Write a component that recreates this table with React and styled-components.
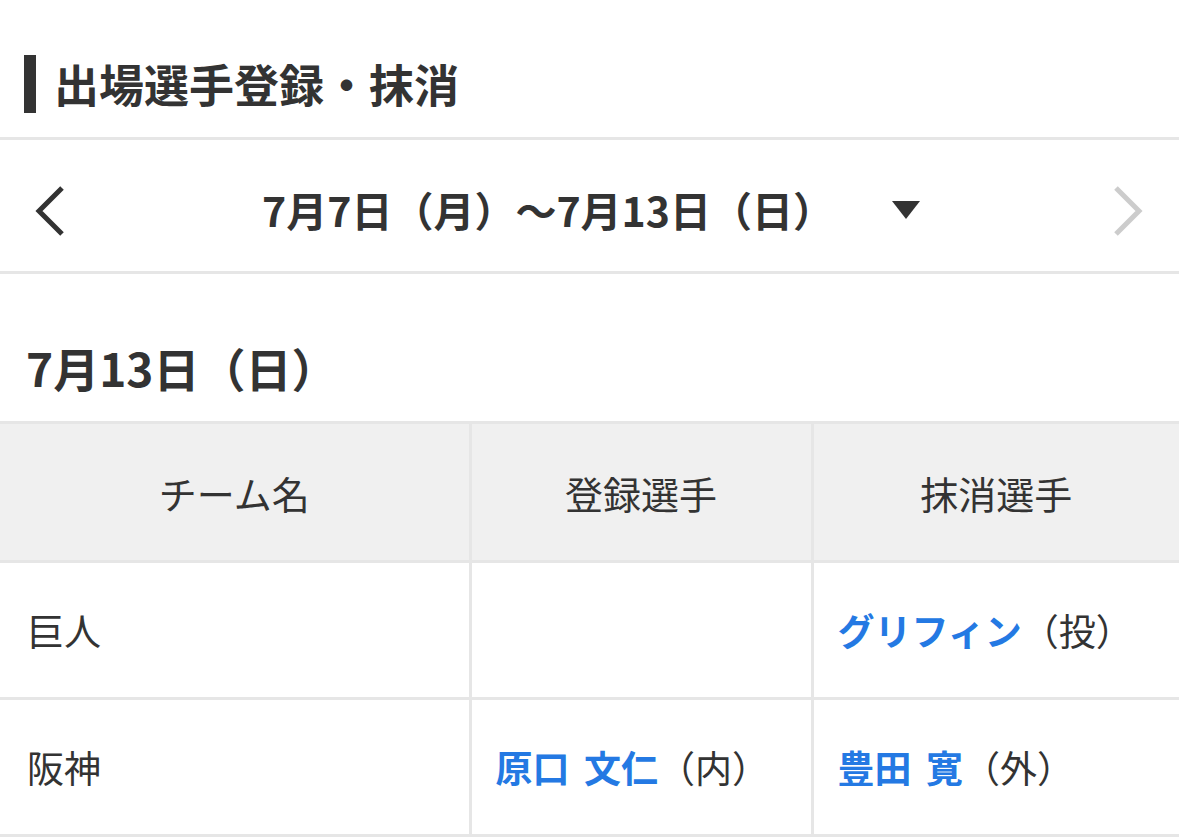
import React from 'react';
import styled, { createGlobalStyle } from 'styled-components';

const GlobalStyle = createGlobalStyle`
  body {
    margin: 0;
    background: #fff;
    color: #333;
    font-family: "Noto Sans CJK JP", "Noto Sans", sans-serif;
  }
`;

const rows = [
  { team: '巨人', add: null, remove: { name: 'グリフィン', pos: '投' } },
  { team: '阪神', add: { name: '原口 文仁', pos: '内' }, remove: { name: '豊田 寛', pos: '外' } },
];

const Page = styled.div`
  width: 1179px;
`;

const TitleBar = styled.header`
  height: 140px;
  box-sizing: border-box;
  padding: 55px 0 0 24px;
  border-bottom: 3px solid #e6e6e6;
`;

const Title = styled.h1`
  margin: 0;
  height: 58px;
  border-left: 12px solid #333;
  padding-left: 18px;
  font-size: 45px;
  font-weight: 700;
  line-height: 58px;
  color: #333;
`;

const WeekNav = styled.nav`
  height: 134px;
  box-sizing: border-box;
  border-bottom: 3px solid #e6e6e6;
  display: flex;
  align-items: center;
  justify-content: space-between;
  padding: 6px 36px 0 35px;
`;

const Arrow = styled.button`
  border: 0;
  background: none;
  padding: 0;
  width: 30px;
  height: 52px;
  margin-top: 4px;
  display: flex;
  align-items: center;
  justify-content: center;
  color: ${(p) => (p.$disabled ? '#cccccc' : '#333')};
`;

const WeekSelect = styled.div`
  display: flex;
  align-items: center;
  gap: 58px;
  margin-left: 4px;
`;

const WeekLabel = styled.span`
  font-size: 41px;
  font-weight: 700;
  color: #333;
`;

const Caret = styled.span`
  width: 0;
  height: 0;
  border-left: 14px solid transparent;
  border-right: 14px solid transparent;
  border-top: 18px solid #333;
  margin-top: 2px;
`;

const DayHeading = styled.h2`
  margin: 68px 0 29px;
  padding-left: 26px;
  font-size: 46px;
  font-weight: 700;
  line-height: 50px;
  color: #333;
`;

const Table = styled.table`
  width: 100%;
  border-collapse: collapse;
  table-layout: fixed;
  border-top: 3px solid #e6e6e6;
`;

const Col = styled.col`
  width: ${(p) => p.$w}px;
`;

const Th = styled.th`
  height: 134px;
  background: #f0f0f0;
  font-size: 38px;
  font-weight: 400;
  color: #333;
  text-align: center;
  border-bottom: 3px solid #e6e6e6;
  border-left: 3px solid #e6e6e6;
  &:first-child {
    border-left: 0;
  }
`;

const Td = styled.td`
  height: 134px;
  padding: 0 0 0 24px;
  font-size: 37px;
  color: #333;
  border-bottom: 3px solid #e6e6e6;
  border-left: 3px solid #e6e6e6;
  white-space: nowrap;
  &:first-child {
    border-left: 0;
    padding-left: 27px;
  }
`;

const PlayerLink = styled.a`
  color: #2479e3;
  font-weight: 700;
  text-decoration: none;
  word-spacing: 6px;
`;

const Chevron = ({ dir }) => (
  <svg width="30" height="52" viewBox="0 0 30 52" fill="none">
    <path
      d={dir === 'left' ? 'M27 3 L4 26 L27 49' : 'M3 3 L26 26 L3 49'}
      stroke="currentColor"
      strokeWidth="5"
      strokeLinecap="butt"
      strokeLinejoin="miter"
    />
  </svg>
);

const Player = ({ data }) =>
  data ? (
    <>
      <PlayerLink href="#">{data.name}</PlayerLink>（{data.pos}）
    </>
  ) : null;

export default function App() {
  return (
    <Page>
      <GlobalStyle />
      <TitleBar>
        <Title>出場選手登録・抹消</Title>
      </TitleBar>
      <WeekNav>
        <Arrow aria-label="前の週">
          <Chevron dir="left" />
        </Arrow>
        <WeekSelect>
          <WeekLabel>7月7日（月）～7月13日（日）</WeekLabel>
          <Caret />
        </WeekSelect>
        <Arrow $disabled aria-label="次の週">
          <Chevron dir="right" />
        </Arrow>
      </WeekNav>
      <DayHeading>7月13日（日）</DayHeading>
      <Table>
        <colgroup>
          <Col $w={470} />
          <Col $w={342} />
          <Col $w={367} />
        </colgroup>
        <thead>
          <tr>
            <Th>チーム名</Th>
            <Th>登録選手</Th>
            <Th>抹消選手</Th>
          </tr>
        </thead>
        <tbody>
          {rows.map((r) => (
            <tr key={r.team}>
              <Td>{r.team}</Td>
              <Td><Player data={r.add} /></Td>
              <Td><Player data={r.remove} /></Td>
            </tr>
          ))}
        </tbody>
      </Table>
    </Page>
  );
}
